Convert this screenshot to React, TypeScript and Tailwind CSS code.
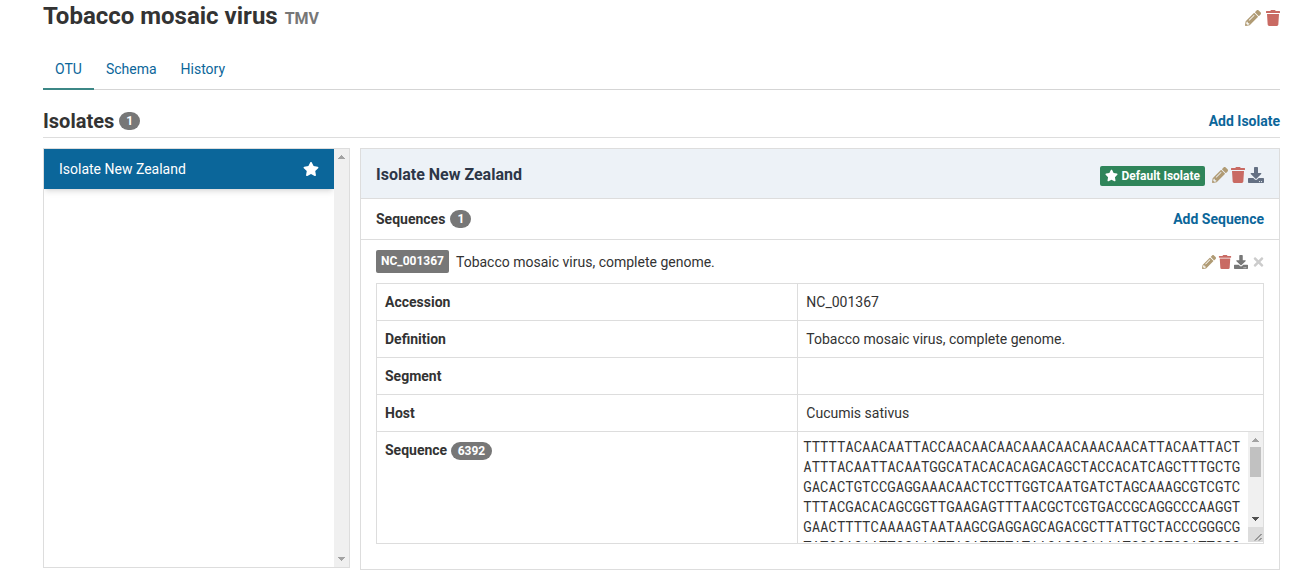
import React from "react";
import { FaPencilAlt, FaTrash, FaDownload, FaStar, FaTimes } from "react-icons/fa";

const sequence = [
  "TTTTTACAACAATTACCAACAACAACAAACAACAAACAACATTACAATTACT",
  "ATTTACAATTACAATGGCATACACACAGACAGCTACCACATCAGCTTTGCTG",
  "GACACTGTCCGAGGAAACAACTCCTTGGTCAATGATCTAGCAAAGCGTCGTC",
  "TTTACGACACAGCGGTTGAAGAGTTTAACGCTCGTGACCGCAGGCCCAAGGT",
  "GAACTTTTCAAAAGTAATAAGCGAGGAGCAGACGCTTATTGCTACCCGGGCG",
  "TATCGACAATTGCAAATTACATTTTATAACACGCAAAATGCGGTGCATTCGG",
].join("");

const rows = [
  ["Accession", "NC_001367"],
  ["Definition", "Tobacco mosaic virus, complete genome."],
  ["Segment", ""],
  ["Host", "Cucumis sativus"],
];

function Count({ value }: { value: number }) {
  return (
    <span className="inline-block h-[18px] rounded-[10px] bg-[#777777] px-[7px] text-center text-xs font-bold leading-[18px] text-white">
      {value}
    </span>
  );
}

function IconButton({ label, className, children }: { label: string; className: string; children: React.ReactNode }) {
  return (
    <button type="button" aria-label={label} className={className}>
      {children}
    </button>
  );
}

function Arrow({ down = false, className }: { down?: boolean; className: string }) {
  return (
    <svg viewBox="0 0 7 4" className={`h-1 w-[7px] ${className}`} shapeRendering="crispEdges" aria-hidden="true">
      <path d={down ? "M0 0h7v1H6v1H5v1H4v1H3V3H2V2H1V1H0z" : "M3 0h1v1h1v1h1v1h1v1H0V3h1V2h1V1h1z"} fill="currentColor" />
    </svg>
  );
}

export default function App() {
  return (
    <main className="bg-white pl-[43px] pr-[15px] pb-4 font-['Roboto',sans-serif] text-sm leading-5 text-[#333333]">
      <header className="flex items-center justify-between pt-px">
        <h1 className="flex items-baseline gap-[7px] text-2xl font-bold leading-[30px]">
          Tobacco mosaic virus
          <small className="text-base font-bold text-[#777777]">TMV</small>
        </h1>
        <div className="flex gap-[5px] pt-1 text-base">
          <IconButton label="Edit OTU" className="text-[#b09b74]"><FaPencilAlt /></IconButton>
          <IconButton label="Remove OTU" className="text-[#c96a63]"><FaTrash className="w-[14px]" /></IconButton>
        </div>
      </header>

      <nav className="mt-[18px] flex border-b border-[#d5d5d5] text-[#0b669a]">
        <a href="#otu" className="-mb-px border-b-2 border-[#3c8786] px-3 pt-[10px] pb-[9px]">OTU</a>
        <a href="#schema" className="px-3 py-[10px]">Schema</a>
        <a href="#history" className="px-3 py-[10px]">History</a>
      </nav>

      <div className="mt-5 flex items-center justify-between border-b border-[#dddddd] pb-[5px]">
        <h2 className="flex items-center gap-[5px] text-xl font-bold leading-[22px]">
          Isolates <Count value={1} />
        </h2>
        <a href="#add-isolate" className="font-bold text-[#0b669a]">Add Isolate</a>
      </div>

      <div className="mt-[10px] flex items-start gap-[10px]">
        <div className="flex h-[420px] w-[307px] shrink-0 border border-[#dddddd]">
          <div className="min-w-0 flex-1 overflow-x-hidden overflow-y-auto">
            <button type="button" className="flex h-10 w-full items-center justify-between bg-[#0b669a] px-[15px] text-white shadow-md">
              Isolate New Zealand
              <FaStar className="size-4" />
            </button>
          </div>
          <div className="flex w-[15px] flex-col items-center justify-between bg-[#f0f0f0] py-[6px] text-[#a3a3a3]">
            <Arrow className="" />
            <Arrow down className="" />
          </div>
        </div>

        <section className="min-w-0 flex-1 border border-[#dddddd] pb-[25px]">
          <div className="flex h-[50px] items-center justify-between border-b border-[#dddddd] bg-[#edf2f7] px-[15px] pt-[2px]">
            <h3 className="text-base font-bold text-[#2d3748]">Isolate New Zealand</h3>
            <div className="flex items-center text-base">
              <span className="mr-[7px] mt-[2px] flex h-5 items-center gap-[3px] rounded-xs bg-[#2f855a] px-[5px] text-xs font-bold text-white">
                <FaStar className="size-[13px]" /> Default Isolate
              </span>
              <div className="flex gap-[2px]">
                <IconButton label="Edit isolate" className="text-[#b09b74]"><FaPencilAlt /></IconButton>
                <IconButton label="Remove isolate" className="text-[#c96a63]"><FaTrash className="w-4" /></IconButton>
                <IconButton label="Download isolate" className="text-[#647083]"><FaDownload /></IconButton>
              </div>
            </div>
          </div>

          <div className="flex h-[41px] items-center justify-between border-b border-[#dddddd] px-[15px]">
            <h4 className="flex items-center gap-[5px] font-bold">Sequences <Count value={1} /></h4>
            <a href="#add-sequence" className="font-bold text-[#0b669a]">Add Sequence</a>
          </div>

          <div className="px-[15px] pt-[10px]">
            <div className="flex items-center justify-between">
              <div className="flex items-center gap-[7px]">
                <span className="h-[23px] rounded-xs bg-[#777777] px-[5px] text-xs font-bold leading-[22px] text-white">NC_001367</span>
                Tobacco mosaic virus, complete genome.
              </div>
              <div className="flex gap-[2px] text-sm">
                <IconButton label="Edit sequence" className="text-[#b09b74]"><FaPencilAlt /></IconButton>
                <IconButton label="Remove sequence" className="text-[#c96a63]"><FaTrash className="w-[14px]" /></IconButton>
                <IconButton label="Download sequence" className="text-[#777777]"><FaDownload /></IconButton>
                <IconButton label="Close" className="ml-[3px] text-[#cccccc]"><FaTimes className="w-[11px]" /></IconButton>
              </div>
            </div>

            <table className="mt-[10px] w-full table-fixed border-collapse border border-[#dddddd]">
              <colgroup>
                <col className="w-[47.5%]" />
                <col />
              </colgroup>
              <tbody>
                {rows.map(([name, value]) => (
                  <tr key={name} className="h-[37px]">
                    <th scope="row" className="border border-[#dddddd] px-2 text-left font-bold">{name}</th>
                    <td className="border border-[#dddddd] px-2">{value}</td>
                  </tr>
                ))}
                <tr>
                  <th scope="row" className="border border-[#dddddd] px-2 pt-2 text-left align-top font-bold">
                    <label htmlFor="sequence">Sequence</label> <Count value={6392} />
                  </th>
                  <td className="border border-[#dddddd] p-0 pb-px">
                    <div className="flex h-[110px]">
                      <textarea
                        id="sequence"
                        readOnly
                        defaultValue={sequence}
                        className="block h-full min-w-0 flex-1 resize-none overflow-y-scroll break-all px-[5px] py-[5px] font-['Roboto_Mono','Liberation_Mono',monospace] leading-5 outline-none [scrollbar-width:none]"
                      />
                      <div className="flex w-[15px] shrink-0 flex-col bg-[#f0f0f0]">
                        <div className="flex flex-1 flex-col items-center pt-[6px] pb-[6px]">
                          <Arrow className="text-[#a3a3a3]" />
                          <div className="mt-[5px] mb-auto h-[30px] w-[11px] bg-[#c1c1c1]" />
                          <Arrow down className="text-[#505050]" />
                        </div>
                        <svg viewBox="0 0 15 15" className="size-[15px] bg-[#dcdcdc]" fill="none" stroke="#555555" aria-hidden="true">
                          <path d="M7 13.5 13.5 7M11 13.5l2.500-2.500" />
                        </svg>
                      </div>
                    </div>
                  </td>
                </tr>
              </tbody>
            </table>
          </div>
        </section>
      </div>
    </main>
  );
}
